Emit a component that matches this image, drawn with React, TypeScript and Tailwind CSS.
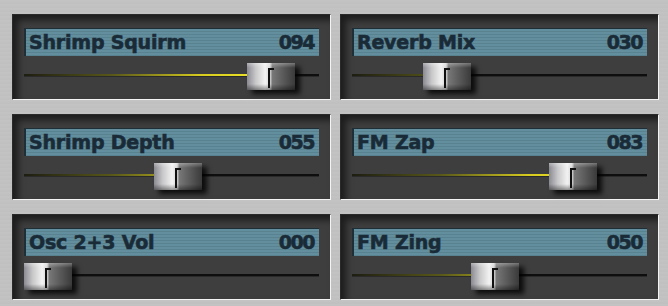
import React from "react";

type P = { name: string; value: number };

const params: P[] = [
  { name: "Shrimp Squirm", value: 94 },
  { name: "Reverb Mix", value: 30 },
  { name: "Shrimp Depth", value: 55 },
  { name: "FM Zap", value: 83 },
  { name: "Osc 2+3 Vol", value: 0 },
  { name: "FM Zing", value: 50 },
];

function Thumb({ left }: { left: number }) {
  return (
    <div
      className="absolute top-[7px] w-[48px] h-[27px] shadow-[5px_4px_5px_rgba(0,0,0,0.8)] bg-[linear-gradient(90deg,#8a8a92_0%,#c8c8ca_18%,#f2f2f2_38%,#d6d6d6_48%,#777_53%,#5e5e5e_72%,#3a3a3a_100%)] flex justify-center pt-[5px] pb-[2px]"
      style={{ left }}
    >
      <div className="absolute inset-0 bg-[linear-gradient(180deg,rgba(255,255,255,0.3)_0%,rgba(255,255,255,0)_18%,rgba(0,0,0,0)_78%,rgba(0,0,0,0.4)_100%)]" />
      <div className="relative w-[6px] border-l-2 border-t-2 border-[#101010]" />
    </div>
  );
}

function Panel({ p }: { p: P }) {
  const left = Math.round(p.value * 2.37);
  const num = String(p.value).padStart(3, "0");
  return (
    <div className="w-[319px] h-[86px] border-t border-l border-[#2a2a2a] border-r border-b border-r-[#f4f4f4] border-b-[#f4f4f4] bg-[#3e3e3e] shadow-[inset_5px_5px_7px_rgba(0,0,0,0.55)] pt-[13px] px-[11px]">
      <div
        className="h-[28px] border-l-2 border-t border-[#1f2f38] flex items-center justify-between pl-[3px] pr-[5px] bg-[repeating-linear-gradient(180deg,#628e9e_0px,#628e9e_2px,#58828f_2px,#58828f_3px)] text-[#1a2b38] font-bold text-[19px] leading-none [-webkit-text-stroke:0.6px_#1a2b38]"
        style={{ fontFamily: '"DejaVu Sans", Verdana, sans-serif' }}
      >
        <span className="tracking-[-0.2px]">{p.name}</span>
        <span className="tracking-[-1.5px]">{num}</span>
      </div>
      <div className="relative h-[42px] pt-[18px]">
        <div className="h-[3px] bg-[#0e0e0e] border-b border-[#2a2a2a] flex items-end">
          <div className="h-[2px] overflow-hidden" style={{ width: left }}>
            <div className="w-[296px] h-[2px] bg-[linear-gradient(90deg,rgba(40,40,20,0.6)_0%,rgba(120,120,30,0.7)_30%,#d8cc20_60%,#f4ec2a_85%,#fff240_100%)]" />
          </div>
        </div>
        <Thumb left={left} />
      </div>
    </div>
  );
}

export default function App() {
  return (
    <div className="w-[668px] h-[306px] overflow-hidden bg-[#c2c2c2] bg-[repeating-linear-gradient(180deg,#c6c6c6_0px,#c0c0c0_1px,#c4c4c4_2px,#bdbdbd_3px,#c3c3c3_4px)] pl-[12px] pt-[14px]">
      <div className="grid grid-cols-[319px_319px] gap-x-[9px] gap-y-[14px]">
        {params.map((p) => (
          <Panel key={p.name} p={p} />
        ))}
      </div>
    </div>
  );
}
